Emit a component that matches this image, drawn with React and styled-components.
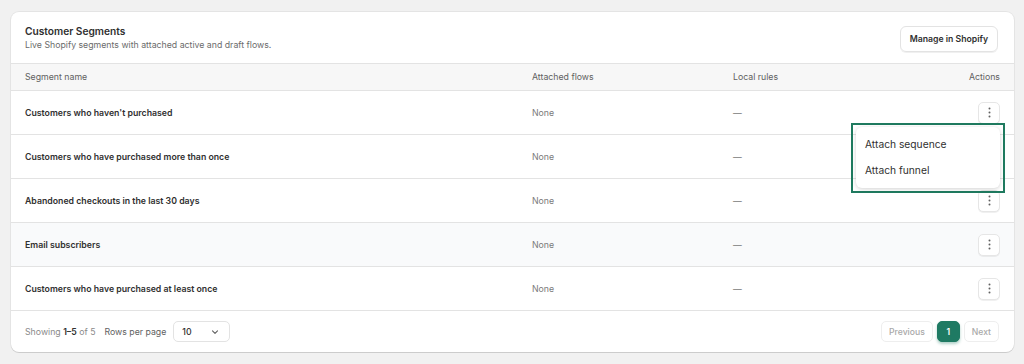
import styled, { createGlobalStyle } from "styled-components";

const GlobalStyle = createGlobalStyle`
	body {
		margin: 0;
		background: #f1f1f1;
		font-family: Inter, "Noto Sans", sans-serif;
		color: #303030;
	}
`;

const segments = [
	{ name: "Customers who haven't purchased", menu: true },
	{ name: "Customers who have purchased more than once", hideButton: true },
	{ name: "Abandoned checkouts in the last 30 days" },
	{ name: "Email subscribers", hovered: true },
	{ name: "Customers who have purchased at least once" },
];

function DotsIcon() {
	return (
		<svg width="3" height="11" viewBox="0 0 3 11">
			<circle cx="1.5" cy="1.5" r="1" fill="#616161" />
			<circle cx="1.5" cy="5.5" r="1" fill="#616161" />
			<circle cx="1.5" cy="9.5" r="1" fill="#616161" />
		</svg>
	);
}

export default function App() {
	return (
		<Page>
			<GlobalStyle />
			<Card>
				<Header>
					<div>
						<Title>Customer Segments</Title>
						<Subtitle>Live Shopify segments with attached active and draft flows.</Subtitle>
					</div>
					<Button>Manage in Shopify</Button>
				</Header>

				<HeadRow>
					<HeadCell>Segment name</HeadCell>
					<HeadCell>Attached flows</HeadCell>
					<HeadCell>Local rules</HeadCell>
					<HeadCell $right>Actions</HeadCell>
				</HeadRow>

				{segments.map((segment) => (
					<Row key={segment.name} $hovered={segment.hovered}>
						<NameCell>{segment.name}</NameCell>
						<MutedCell>None</MutedCell>
						<MutedCell>—</MutedCell>
						<ActionCell>
							{!segment.hideButton && (
								<DotsButton>
									<DotsIcon />
								</DotsButton>
							)}
							{segment.menu && (
								<MenuFocus>
									<Menu>
										<MenuItem>Attach sequence</MenuItem>
										<MenuItem>Attach funnel</MenuItem>
									</Menu>
								</MenuFocus>
							)}
						</ActionCell>
					</Row>
				))}

				<Footer>
					<FooterLeft>
						<Showing>
							Showing <b>1–5</b> of 5
						</Showing>
						<RowsLabel>Rows per page</RowsLabel>
						<Select>
							<span>10</span>
							<svg width="10" height="10" viewBox="0 0 10 10">
								<path d="M2.5 3.8 5 6.3 7.5 3.8" fill="none" stroke="#616161" strokeWidth="1.1" strokeLinecap="round" strokeLinejoin="round" />
							</svg>
						</Select>
					</FooterLeft>
					<Pager>
						<PageButton $disabled>Previous</PageButton>
						<PageButton $active>1</PageButton>
						<PageButton $disabled>Next</PageButton>
					</Pager>
				</Footer>
			</Card>
		</Page>
	);
}

// UI
const Page = styled.div`
	padding: 12px 10px 12px 11px;
`;

const Card = styled.div`
	background: #ffffff;
	border-radius: 8px;
	box-shadow: 0 1px 0 rgba(0, 0, 0, 0.1), 0 0 0 1px rgba(0, 0, 0, 0.05);
	width: 1003px;
`;

const Header = styled.div`
	display: flex;
	justify-content: space-between;
	align-items: center;
	padding: 12px 16px 11px 14px;
	height: 52px;
	box-sizing: border-box;
	border-bottom: 1px solid #e3e3e3;
`;

const Title = styled.div`
	font-size: 10.2px;
	font-weight: 600;
	color: #303030;
	line-height: 15px;
`;

const Subtitle = styled.div`
	font-size: 8.75px;
	color: #6b6b6b;
	line-height: 13px;
`;

const Button = styled.div`
	font-size: 8.7px;
	font-weight: 600;
	color: #303030;
	padding: 0 9px;
	height: 24px;
	display: flex;
	align-items: center;
	border: 1px solid #e3e3e3;
	border-radius: 6px;
	box-shadow: 0 1px 0 rgba(0, 0, 0, 0.06);
	margin-top: 1px;
`;

const columns = "507px 201px 1fr 60px";

const HeadRow = styled.div`
	display: grid;
	grid-template-columns: ${columns};
	align-items: center;
	height: 27px;
	padding: 0 14px 0 14px;
	background: #f7f7f7;
	border-bottom: 1px solid #e3e3e3;
	box-sizing: border-box;
`;

const HeadCell = styled.div`
	font-size: 8.75px;
	color: #616161;
	text-align: ${(p) => (p.$right ? "right" : "left")};
`;

const Row = styled.div`
	display: grid;
	grid-template-columns: ${columns};
	align-items: center;
	height: 44px;
	padding: 0 14px;
	background: ${(p) => (p.$hovered ? "#f9fafb" : "#ffffff")};
	border-bottom: 1px solid #e3e3e3;
	box-sizing: border-box;
`;

const NameCell = styled.div`
	font-size: 8.75px;
	font-weight: 600;
	color: #303030;
`;

const MutedCell = styled.div`
	font-size: 8.75px;
	color: #7a7a7a;
`;

const ActionCell = styled.div`
	position: relative;
	display: flex;
	justify-content: flex-end;
`;

const DotsButton = styled.div`
	width: 22px;
	height: 22px;
	box-sizing: border-box;
	border: 1px solid #e6e6e6;
	border-radius: 5px;
	box-shadow: 0 1px 0 rgba(0, 0, 0, 0.06);
	background: #ffffff;
	display: flex;
	align-items: center;
	justify-content: center;
`;

const MenuFocus = styled.div`
	position: absolute;
	top: 21px;
	right: -5px;
	width: 154px;
	height: 70px;
	box-sizing: border-box;
	border: 2px solid #1f7a5f;
	padding: 2px 3px 3px 3px;
	z-index: 2;
`;

const Menu = styled.div`
	background: #ffffff;
	border-radius: 6px;
	box-shadow: 0 1px 4px rgba(0, 0, 0, 0.18);
	height: 100%;
	padding: 4px 0;
	box-sizing: border-box;
`;

const MenuItem = styled.div`
	font-size: 10.25px;
	color: #303030;
	height: 26px;
	display: flex;
	align-items: center;
	padding-left: 9px;
`;

const Footer = styled.div`
	display: flex;
	justify-content: space-between;
	align-items: center;
	height: 41px;
	padding: 0 15px 0 14px;
`;

const FooterLeft = styled.div`
	display: flex;
	align-items: center;
`;

const Showing = styled.span`
	font-size: 8.75px;
	color: #8a8a8a;
	b {
		color: #303030;
		font-weight: 600;
	}
`;

const RowsLabel = styled.span`
	font-size: 8.75px;
	color: #616161;
	margin-left: 9px;
`;

const Select = styled.div`
	margin-left: 7px;
	width: 57px;
	height: 21px;
	box-sizing: border-box;
	border: 1px solid #e3e3e3;
	border-radius: 5px;
	display: flex;
	align-items: center;
	justify-content: space-between;
	padding: 0 9px 0 8px;
	font-size: 8.75px;
	font-weight: 500;
	color: #303030;
`;

const Pager = styled.div`
	display: flex;
	gap: 4px;
	align-items: center;
`;

const PageButton = styled.div`
	height: 21px;
	min-width: 23px;
	box-sizing: border-box;
	padding: 0 7px;
	display: flex;
	align-items: center;
	justify-content: center;
	border-radius: 5px;
	font-size: 8.6px;
	font-weight: ${(p) => (p.$active ? 600 : 500)};
	color: ${(p) => (p.$active ? "#ffffff" : "#a8a8a8")};
	background: ${(p) => (p.$active ? "#1f7a63" : "#ffffff")};
	border: 1px solid ${(p) => (p.$active ? "#1f7a63" : "#eeeeee")};
	box-shadow: ${(p) => (p.$active ? "0 2px 3px rgba(31,122,99,0.35)" : "none")};
`;
